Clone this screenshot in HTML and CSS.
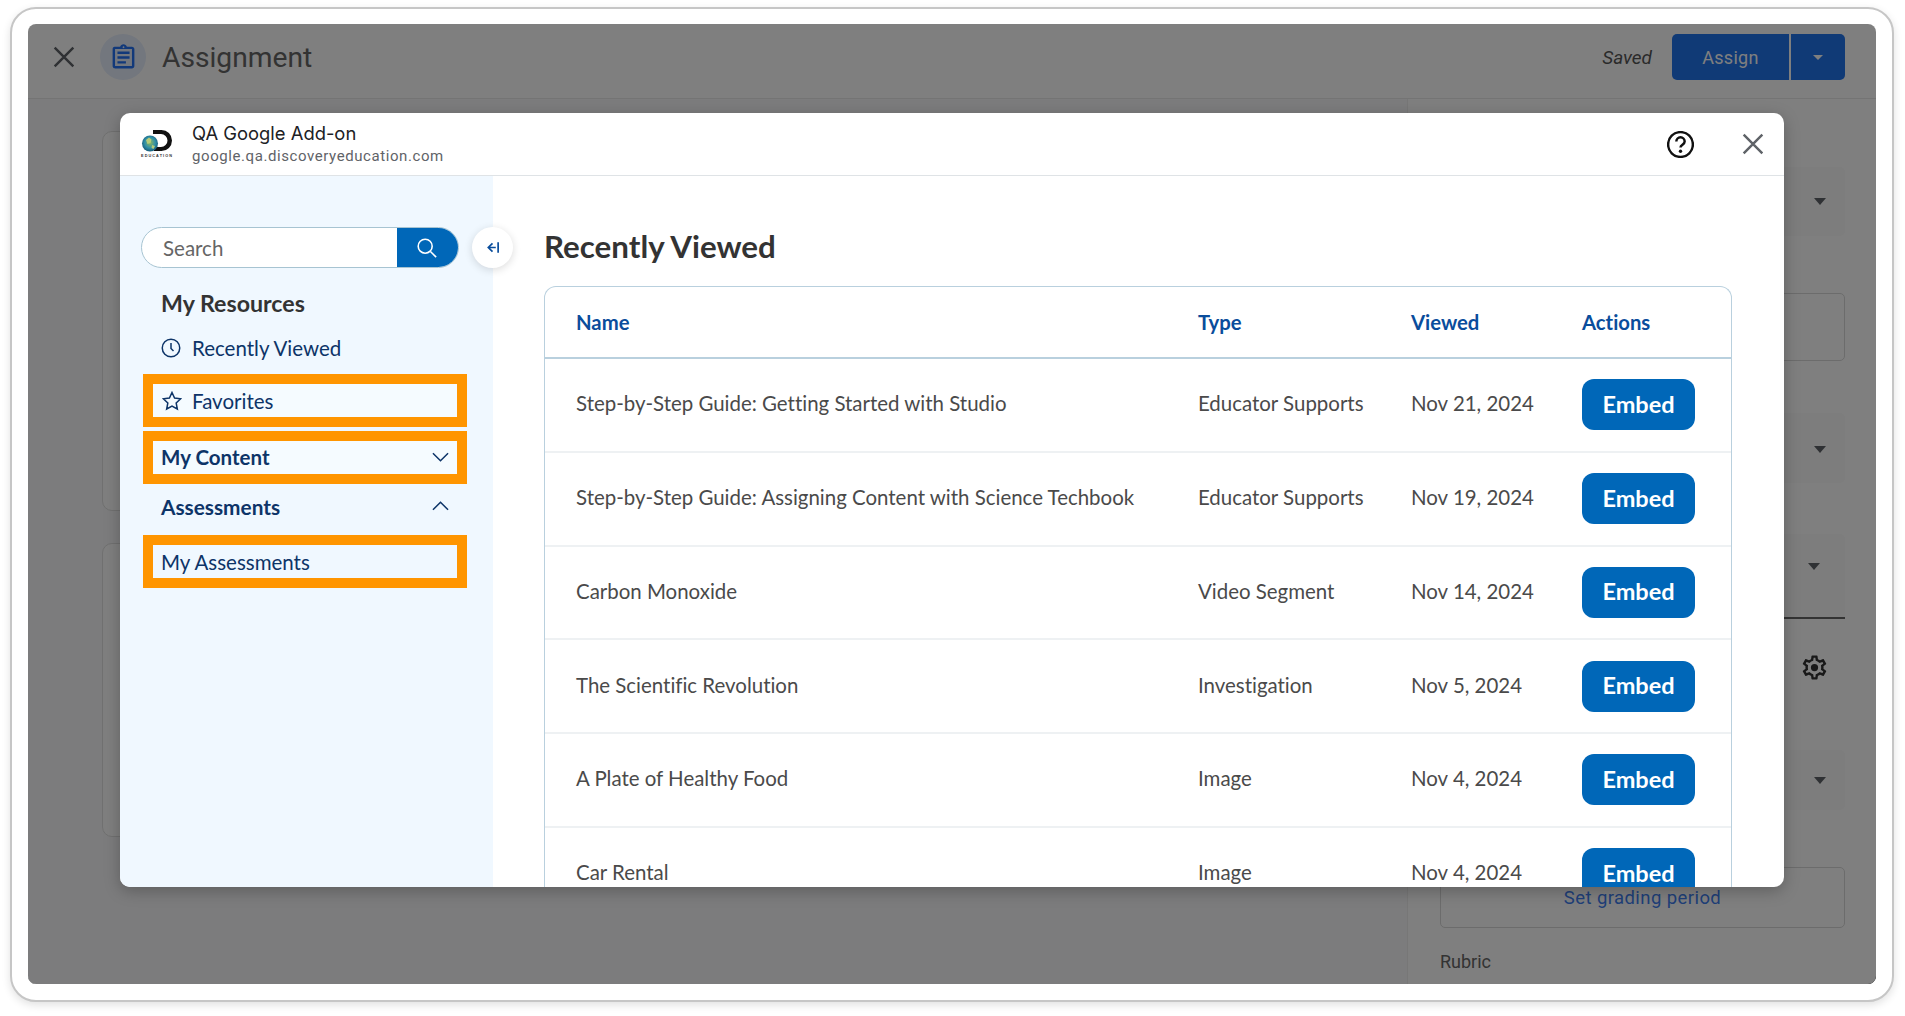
FILE: index.html
```html
<!DOCTYPE html>
<html lang="en">
<head>
<meta charset="utf-8">
<title>Assignment</title>
<link rel="stylesheet" href="styles.css">
</head>
<body>
<div class="frame">
  <div class="screen">
    <div class="app">
      <header class="topbar">
        <svg class="app-close" viewBox="0 0 24 24"><path d="M4 4l16 16M20 4L4 20"/></svg>
        <span class="doc-badge"><svg viewBox="0 0 24 24"><path d="M7 15h7v2H7zm0-4h10v2H7zm0-4h10v2H7zm12-4h-4.18C14.4 1.84 13.3 1 12 1c-1.3 0-2.4.84-2.82 2H5c-.14 0-.27.01-.4.04-.39.08-.74.28-1.01.55-.18.18-.33.4-.43.64-.1.23-.16.49-.16.77v14c0 .27.06.54.16.78s.25.45.43.64c.27.27.62.47 1.01.55.13.02.26.03.4.03h14c1.1 0 2-.9 2-2V5c0-1.1-.9-2-2-2zm-7-.25c.41 0 .75.34.75.75s-.34.75-.75.75-.75-.34-.75-.75.34-.75.75-.75zM19 19H5V5h14v14z"/></svg></span>
        <h1 class="doc-title">Assignment</h1>
        <em class="saved">Saved</em>
        <div class="assign-group">
          <span class="assign-main">Assign</span>
          <span class="assign-more"><i class="caret caret-light"></i></span>
        </div>
      </header>
      <div class="workspace">
        <section class="left-pane">
          <div class="ghost-card ghost-card-a"></div>
          <div class="ghost-card ghost-card-b"></div>
        </section>
        <aside class="right-pane">
          <div class="field field-a"><i class="caret"></i></div>
          <div class="outline outline-a"></div>
          <div class="field field-b"><i class="caret"></i></div>
          <div class="field field-c"><i class="caret"></i></div>
          <div class="gear-row"><svg class="gear" viewBox="0 0 24 24"><path d="M19.43 12.98c.04-.32.07-.64.07-.98 0-.34-.03-.66-.07-.98l2.11-1.65c.19-.15.24-.42.12-.64l-2-3.46c-.09-.16-.26-.25-.44-.25-.06 0-.12.01-.17.03l-2.49 1c-.52-.4-1.08-.73-1.69-.98l-.38-2.65C14.46 2.18 14.25 2 14 2h-4c-.25 0-.46.18-.49.42l-.38 2.65c-.61.25-1.17.59-1.69.98l-2.49-1c-.06-.02-.12-.03-.18-.03-.17 0-.34.09-.43.25l-2 3.46c-.13.22-.07.49.12.64l2.11 1.65c-.04.32-.07.65-.07.98 0 .33.03.66.07.98l-2.11 1.65c-.19.15-.24.42-.12.64l2 3.46c.09.16.26.25.44.25.06 0 .12-.01.17-.03l2.49-1c.52.4 1.08.73 1.69.98l.38 2.65c.03.24.24.42.49.42h4c.25 0 .46-.18.49-.42l.38-2.65c.61-.25 1.17-.59 1.69-.98l2.49 1c.06.02.12.03.18.03.17 0 .34-.09.43-.25l2-3.46c.12-.22.07-.49-.12-.64l-2.11-1.65zm-1.98-1.71c.04.31.05.52.05.73 0 .21-.02.43-.05.73l-.14 1.13.89.7 1.08.84-.7 1.21-1.27-.51-1.04-.42-.9.68c-.43.32-.84.56-1.25.73l-1.06.43-.16 1.13-.2 1.35h-1.4l-.19-1.35-.16-1.13-1.06-.43c-.43-.18-.83-.41-1.23-.71l-.91-.7-1.06.43-1.27.51-.7-1.21 1.08-.84.89-.7-.14-1.13c-.03-.31-.05-.54-.05-.74s.02-.43.05-.73l.14-1.13-.89-.7-1.08-.84.7-1.21 1.27.51 1.04.42.9-.68c.43-.32.84-.56 1.25-.73l1.06-.43.16-1.13.2-1.35h1.39l.19 1.35.16 1.13 1.06.43c.43.18.83.41 1.23.71l.91.7 1.06-.43 1.27-.51.7 1.21-1.07.85-.89.7.14 1.13zM12 9a3 3 0 100 6 3 3 0 000-6z"/></svg></div>
          <div class="field field-d"><i class="caret"></i></div>
          <div class="outline outline-b"><span class="grading-link">Set grading period</span></div>
          <div class="rubric">Rubric</div>
        </aside>
      </div>
    </div>

    <div class="scrim">
      <div class="modal">
        <div class="modal-head">
          <svg class="logo" viewBox="0 0 31 28">
            <defs><radialGradient id="globe" cx="50%" cy="45%" r="60%"><stop offset="0" stop-color="#8fb85c"/><stop offset=".55" stop-color="#2f8fa8"/><stop offset="1" stop-color="#12506e"/></radialGradient></defs>
            <path d="M12 0h8.500a10.500 10.500 0 010 21h-7.500v-4h7a6.500 6.500 0 000-13h-8z" fill="#111"/>
            <circle cx="9" cy="13.500" r="8" fill="url(#globe)"/>
            <path d="M5 10l3-2.500 2.500 2-1 3.500-3 1zM11 15l3 1-1.500 3-2-1z" fill="#b5cb78"/>
            <text x="0" y="27" class="logo-text" textLength="31">EDUCATION</text>
          </svg>
          <div class="app-id">
            <div class="app-name">QA Google Add-on</div>
            <div class="app-url">google.qa.discoveryeducation.com</div>
          </div>
          <svg class="help" viewBox="0 0 24 24"><circle cx="12" cy="12" r="11"/><path d="M8.300 9.300a3.700 3.700 0 017.400 0c0 2.700-3.700 2.900-3.700 5.300"/><circle class="help-dot" cx="12" cy="18" r="1.500"/></svg>
          <svg class="modal-close" viewBox="0 0 24 24"><path d="M4 4l16 16M20 4L4 20"/></svg>
        </div>
        <div class="modal-body">
          <nav class="sidebar">
            <div class="search-row">
              <div class="search">
                <span class="search-input">Search</span>
                <span class="search-btn"><svg viewBox="0 0 24 24"><circle cx="10.500" cy="10.500" r="8"/><path d="M16.500 16.500L23 23"/></svg></span>
              </div>
              <span class="collapse"><svg viewBox="0 0 16 16"><path d="M8 3.500L3.500 8 8 12.500M3.500 8h8M14 2.500v11"/></svg></span>
            </div>
            <h2 class="side-title">My Resources</h2>
            <a class="side-link recent"><svg class="side-icon" viewBox="0 0 24 24"><circle cx="12" cy="12" r="10.500"/><path d="M12 6v6.500l3 3"/></svg>Recently Viewed</a>
            <a class="side-link hl hl-first"><svg class="side-icon" viewBox="0 0 24 24"><path d="M12 1.800l3.100 6.700 7.300.9-5.400 5 1.400 7.200-6.400-3.600-6.400 3.600 1.400-7.200-5.400-5 7.300-.9z"/></svg>Favorites</a>
            <a class="side-link hl hl-bold">My Content<svg class="chev" viewBox="0 0 18 10"><path d="M1 1l8 8 8-8"/></svg></a>
            <a class="side-link plain-bold">Assessments<svg class="chev" viewBox="0 0 18 10"><path d="M1 9l8-8 8 8"/></svg></a>
            <a class="side-link hl hl-last">My Assessments</a>
          </nav>
          <main class="content">
            <h2 class="content-title">Recently Viewed</h2>
            <div class="table-wrap">
              <table class="results">
                <colgroup><col class="c-name"><col class="c-type"><col class="c-viewed"><col class="c-actions"></colgroup>
                <thead><tr><th>Name</th><th>Type</th><th>Viewed</th><th>Actions</th></tr></thead>
                <tbody>
                  <tr><td>Step-by-Step Guide: Getting Started with Studio</td><td>Educator Supports</td><td>Nov 21, 2024</td><td><button class="embed">Embed</button></td></tr>
                  <tr><td>Step-by-Step Guide: Assigning Content with Science Techbook</td><td>Educator Supports</td><td>Nov 19, 2024</td><td><button class="embed">Embed</button></td></tr>
                  <tr><td>Carbon Monoxide</td><td>Video Segment</td><td>Nov 14, 2024</td><td><button class="embed">Embed</button></td></tr>
                  <tr><td>The Scientific Revolution</td><td>Investigation</td><td>Nov 5, 2024</td><td><button class="embed">Embed</button></td></tr>
                  <tr><td>A Plate of Healthy Food</td><td>Image</td><td>Nov 4, 2024</td><td><button class="embed">Embed</button></td></tr>
                  <tr><td>Car Rental</td><td>Image</td><td>Nov 4, 2024</td><td><button class="embed">Embed</button></td></tr>
                </tbody>
              </table>
            </div>
          </main>
        </div>
      </div>
    </div>
  </div>
</div>
</body>
</html>
```

FILE: styles.css
```css
* { box-sizing: border-box; }
html, body { margin: 0; height: 100%; background: #fff; overflow: hidden; }
body { font-family: Roboto, "Liberation Sans", sans-serif; padding: 7px 10px 0; font-variant-ligatures: none; }
h1, h2 { margin: 0; }

.frame {
  width: 1884px; height: 995px; padding: 15px 16px 0 16px;
  border: 2px solid #c6c6c6; border-radius: 26px; background: #fff;
  box-shadow: 0 3px 8px rgba(0,0,0,.12);
}
.screen {
  position: relative; width: 1848px; height: 960px;
  border-radius: 8px; overflow: hidden;
  background: linear-gradient(transparent 50%, #000 50%);
}
.app { height: 100%; background: #fff; border-radius: 8px; display: flex; flex-direction: column; }

.topbar { height: 75px; flex: none; display: flex; align-items: center; padding: 0 31px 8px 21.500px; border-bottom: 1px solid #e8e8e8; }
.app-close { width: 28px; height: 28px; fill: none; stroke: #5f6368; stroke-width: 2.100; margin-right: 22.500px; flex: none; }
.doc-badge { width: 46px; height: 46px; border-radius: 50%; background: #e6eefc; display: flex; align-items: center; justify-content: center; margin-right: 16px; }
.doc-badge svg { width: 29px; height: 29px; fill: #2472f4; }
.doc-title { font-size: 28.200px; font-weight: 400; color: #666; flex: 1; }
.saved { font-size: 19px; color: #555; margin-right: 20px; }
.assign-group { display: flex; height: 46px; width: 173px; border-radius: 5px; overflow: hidden; }
.assign-main { width: 119px; background: #2074ec; color: #fff; display: flex; align-items: center; justify-content: center; font-size: 18px; letter-spacing: .3px; border-right: 2px solid #fff; }
.assign-more { flex: 1; background: #2074ec; display: flex; align-items: center; justify-content: center; }
.caret { display: block; width: 0; height: 0; border-left: 6.500px solid transparent; border-right: 6.500px solid transparent; border-top: 7px solid #5f6368; }
.caret-light { border-left-width: 5px; border-right-width: 5px; border-top: 5px solid #fff; }

.workspace { flex: 1; display: grid; grid-template-columns: 1380px 1fr; min-height: 0; }
.left-pane { border-right: 1px solid #eee; padding: 32px 0 0 74px; background: #f8f9fa; }
.ghost-card { border: 1px solid #e0e0e0; border-radius: 10px; background: #fff; width: 600px; }
.ghost-card-a { height: 380px; margin-bottom: 32px; }
.ghost-card-b { height: 294px; }

.right-pane { padding: 68px 31px 0 32px; }
.field { background: #fafafa; border-radius: 5px; display: flex; align-items: center; justify-content: flex-end; padding-right: 19px; }
.field-a { height: 69px; margin-bottom: 57px; }
.outline { border: 1px solid #d8d8d8; border-radius: 5px; }
.outline-a { height: 68px; margin-bottom: 52px; }
.field-b { height: 70px; padding-top: 2px; }
.field-c { height: 85px; margin-top: 51px; padding-bottom: 18px; padding-right: 25px; border-bottom: 2px solid #666; border-radius: 5px 5px 0 0; }
.gear-row { height: 95px; display: flex; justify-content: flex-end; align-items: flex-start; padding: 34px 16px 0 0; }
.gear { width: 29px; height: 29px; fill: #333; }
.field-d { height: 60px; margin-top: 36px; margin-bottom: 57px; }
.outline-b { height: 61px; text-align: center; padding-top: 19px; }
.grading-link { font-size: 18.500px; color: #3f7ef0; letter-spacing: .42px; }
.rubric { margin-top: 23px; font-size: 18px; color: #666; }

.scrim { position: absolute; inset: 0; background: rgba(0,0,0,.5); padding: 89px 0 0 92px; }
.modal { width: 1664px; height: 774px; background: #fff; border-radius: 10px; overflow: hidden; display: flex; flex-direction: column; box-shadow: 0 4px 16px rgba(0,0,0,.25); }
.modal-head { height: 63px; flex: none; display: flex; align-items: center; padding: 0 21px; border-bottom: 1px solid #dfe3e6; }
.logo { width: 31px; height: 28px; margin-right: 20px; overflow: visible; flex: none; }
.logo-text { font-family: "Liberation Sans", sans-serif; font-size: 3.800px; font-weight: 700; fill: #333; }
.app-id { flex: 1; }
.app-name { font-family: Inter, sans-serif; font-size: 18.400px; color: #202124; line-height: 24px; }
.app-url { font-size: 15px; color: #5f6368; line-height: 23px; letter-spacing: .58px; }
.help { width: 27px; height: 27px; fill: none; stroke: #111; stroke-width: 2.200; margin-right: 45px; flex: none; }
.help-dot { fill: #111; stroke: none; }
.modal-close { width: 28px; height: 28px; fill: none; stroke: #5f6368; stroke-width: 2.100; margin-right: -4px; flex: none; }

.modal-body { flex: 1; display: flex; min-height: 0; }
.sidebar { width: 373px; flex: none; background: #f0f8ff; padding: 51px 26px 0 21px; font-family: Lato, "Open Sans", sans-serif; color: #0d3468; }
.search-row { display: flex; align-items: center; position: relative; }
.search { width: 318px; height: 41px; display: flex; border: 1px solid #a7c4d2; border-radius: 21px; background: #fff; overflow: hidden; }
.search-input { flex: 1; font-size: 20.500px; color: #666; padding-left: 21px; line-height: 40px; }
.search-btn { width: 62px; margin: -1px; background: #0067b8; display: flex; align-items: center; justify-content: center; }
.search-btn svg { width: 21px; height: 21px; fill: none; stroke: #fff; stroke-width: 1.800; margin-right: 3px; }
.collapse { position: absolute; left: 331px; top: 0; width: 41px; height: 41px; border-radius: 50%; background: #fff; box-shadow: 0 2px 8px rgba(0,0,0,.14); display: flex; align-items: center; justify-content: center; }
.collapse svg { width: 15px; height: 15px; fill: none; stroke: #0a4d9c; stroke-width: 1.800; }
.side-title { font-size: 23.200px; font-weight: 700; color: #333; padding-left: 20px; margin: 20px 0 0; line-height: 30px; }
.side-link { display: flex; align-items: center; font-size: 20.500px; color: #0d3468; padding-left: 19px; position: relative; }
.side-icon { width: 20px; height: 20px; fill: none; stroke: #0d3468; stroke-width: 1.800; margin-right: 10px; flex: none; }
.recent { height: 30px; margin: 15px 0 0 -1px; padding-left: 21px; }
.recent .side-icon { margin-right: 11px; }
.hl { height: 53px; width: 324px; margin-left: 2px; border: 10px solid #ff9500; padding-left: 8px; }
.hl-first { margin-top: 11px; background: #f5fbff; padding-left: 9px; }
.hl-bold { margin-top: 4px; font-weight: 700; justify-content: space-between; padding: 0 8px 2px 8px; background: #f5fbff; }
.plain-bold { font-weight: 700; font-size: 20.800px; height: 30px; margin: 7px 0 0 2px; padding-left: 18px; padding-right: 18px; width: 324px; justify-content: space-between; }
.hl-last { margin-top: 14px; }
.chev { width: 17px; height: 10px; fill: none; stroke: #0d3468; stroke-width: 1.600; flex: none; }

.content { flex: 1; padding: 54px 0 0 51px; font-family: Lato, "Open Sans", sans-serif; }
.content-title { font-size: 31.300px; font-weight: 700; color: #333; line-height: 32px; margin-bottom: 24px; }
.table-wrap { width: 1188px; border: 1px solid #b9d0de; border-bottom: 0; border-radius: 12px 12px 0 0; }
.results { width: 100%; table-layout: fixed; border-collapse: separate; border-spacing: 0; }
.c-name { width: 653px; }
.c-type { width: 213px; }
.c-viewed { width: 171px; }
.results th { height: 72px; text-align: left; font-size: 20.300px; font-weight: 700; color: #0a4d9c; border-bottom: 2px solid #b9d0de; padding: 0; }
.results td { height: 93.750px; font-size: 20.450px; color: #4a4a4a; border-bottom: 2px solid #eef1f3; padding: 0 0 3px; }
.results td:last-child { padding-bottom: 0; }
.results th:first-child, .results td:first-child { padding-left: 31px; }
.embed { width: 113px; height: 51px; border: 0; border-radius: 12px; background: #0067b8; color: #fff; font-family: inherit; font-size: 23.500px; font-weight: 700; padding: 0 0 2px; display: block; }
```
